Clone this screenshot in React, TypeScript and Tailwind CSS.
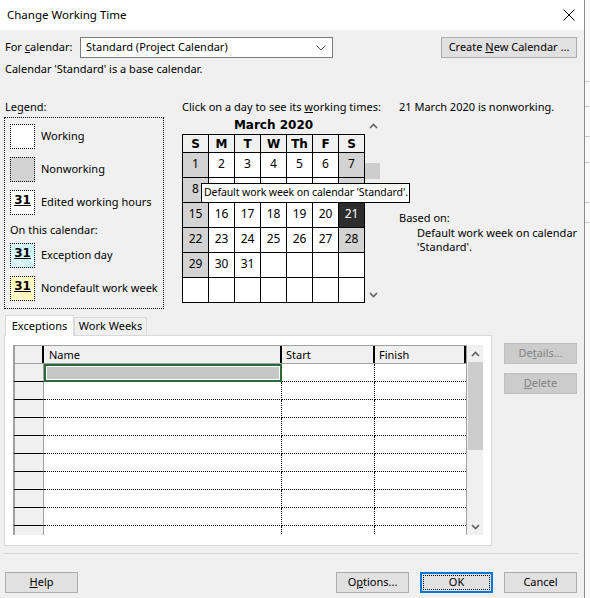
import React from 'react';

// row 2 (8..14) is mostly under the tooltip, only the 8 shows
const weeks: (number | null)[][] = [
  [1, 2, 3, 4, 5, 6, 7],
  [8, 9, 10, 11, 12, 13, 14],
  [15, 16, 17, 18, 19, 20, 21],
  [22, 23, 24, 25, 26, 27, 28],
  [29, 30, 31, null, null, null, null],
  [null, null, null, null, null, null, null],
];

const days = ['S', 'M', 'T', 'W', 'Th', 'F', 'S'];

const Chevron: React.FC<{ dir: 'up' | 'down' }> = ({ dir }) => (
  <svg width="9" height="6" viewBox="0 0 9 6">
    <polyline
      points={dir === 'up' ? '1,5 4.5,1.5 8,5' : '1,1 4.5,4.5 8,1'}
      fill="none"
      stroke="#606060"
      strokeWidth="1.6"
    />
  </svg>
);

const Button: React.FC<{ children: React.ReactNode; className?: string; disabled?: boolean }> = ({
  children,
  className = '',
  disabled,
}) => (
  <div
    className={`h-[21px] w-[73px] flex items-center justify-center border ${
      disabled ? 'bg-[#cccccc] border-[#bfbfbf] text-[#838383]' : 'bg-[#e1e1e1] border-[#adadad] text-black'
    } ${className}`}
  >
    {children}
  </div>
);

const Swatch: React.FC<{ bg: string; label?: boolean }> = ({ bg, label }) => (
  <div className={`w-[25px] h-[25px] border border-dotted border-black flex justify-center pt-[2px] ${bg}`}>
    {label && <span className="font-['DejaVu_Sans',sans-serif] font-bold text-[12px] leading-[14px] underline">31</span>}
  </div>
);

const LegendItem: React.FC<{ bg: string; label?: boolean; text: string; className?: string }> = ({
  bg,
  label,
  text,
  className = '',
}) => (
  <div className={`flex items-center ${className}`}>
    <Swatch bg={bg} label={label} />
    <span className="ml-[6px]">{text}</span>
  </div>
);

const Calendar: React.FC = () => (
  <div className="relative flex ml-[18px]">
    <div className="w-[183px]">
      <div className="h-[17px] text-center font-['DejaVu_Sans',sans-serif] font-bold text-[12px] leading-[17px]">
        March 2020
      </div>
      <div className="grid grid-cols-[repeat(7,26px)] border-l border-t border-black">
        {days.map((d, i) => (
          <div
            key={i}
            className="h-[18px] border-r border-b border-black bg-[#f0f0f0] flex items-center justify-center font-['DejaVu_Sans',sans-serif] font-bold text-[12px]"
          >
            {d}
          </div>
        ))}
        {weeks.map((week, r) =>
          week.map((n, c) => {
            let bg = 'bg-white text-black';
            if (n === 21) bg = 'bg-[#2d2d2d] text-white';
            else if (n !== null && (c === 0 || c === 6)) bg = 'bg-[#d3d3d3] text-black';
            const hidden = r === 1 && c > 0;
            return (
              <div
                key={`${r}-${c}`}
                className={`h-[25px] border-r border-b border-black flex justify-center pt-[3px] text-[12px] leading-[16px] ${bg}`}
              >
                {hidden ? null : n}
              </div>
            );
          })
        )}
      </div>
    </div>
    <div className="w-[16px] h-[185px] flex flex-col">
      <div className="h-[17px] flex items-center justify-center">
        <Chevron dir="up" />
      </div>
      <div className="mt-[29px] h-[16px] w-[15px] bg-[#cdcdcd]" />
      <div className="flex-1" />
      <div className="h-[14px] flex items-center justify-center">
        <Chevron dir="down" />
      </div>
    </div>
    <div className="absolute left-[19px] top-[66px] w-[209px] h-[20px] bg-white border border-black pl-[2px] flex items-center whitespace-nowrap z-10 text-[10.5px] tracking-[-0.1px]">
      Default work week on calendar 'Standard'.
    </div>
  </div>
);

const ExceptionsTable: React.FC = () => {
  const rows = Array.from({ length: 10 }, (_, i) => i);
  return (
    <div className="w-[470px] h-[190px] flex overflow-hidden">
      <div className="w-[453px] flex flex-col">
        <div className="flex h-[19px] bg-[#f0f0f0] border-t border-b border-[#a0a0a0] border-l-2">
          <div className="w-[29px] border-r-2 border-black" />
          <div className="w-[238px] border-r-2 border-black pl-[5px] leading-[17px]">Name</div>
          <div className="w-[93px] border-r-2 border-black pl-[4px] leading-[17px]">Start</div>
          <div className="w-[91px] border-r-2 border-black pl-[4px] leading-[17px]">Finish</div>
        </div>
        {rows.map((i) => (
          <div key={i} className="flex h-[18px] shrink-0">
            <div className="w-[31px] bg-[#f0f0f0] border-l-2 border-r border-b border-l-[#a0a0a0] border-r-[#a0a0a0] border-b-black" />
            {i === 0 ? (
              <div className="w-[238px] border-2 border-[#2a6a35] p-px bg-white">
                <div className="h-full bg-[#c6c6c6]" />
              </div>
            ) : (
              <div className="w-[238px] border-r border-b border-dotted border-black" />
            )}
            <div className="w-[93px] border-r border-b border-dotted border-black" />
            <div className="w-[91px] border-b border-dotted border-black" />
          </div>
        ))}
      </div>
      <div className="w-[17px] h-full flex flex-col bg-[#f0f0f0] border-l border-[#a0a0a0]">
        <div className="h-[17px] flex items-center justify-center">
          <Chevron dir="up" />
        </div>
        <div className="ml-px h-[88px] bg-[#cdcdcd]" />
        <div className="flex-1" />
        <div className="h-[17px] flex items-center justify-center">
          <Chevron dir="down" />
        </div>
      </div>
    </div>
  );
};

export default function App() {
  return (
    <div className="flex w-[590px] h-[598px] overflow-hidden font-['Noto_Sans',sans-serif] text-[11px] text-black">
      <div className="w-[584px] h-[598px] flex flex-col bg-[#f0f0f0] shrink-0">
        <div className="h-[30px] bg-white flex items-center justify-between pl-[7px] pr-[9px] shrink-0">
          <span className="text-[11.5px]">Change Working Time</span>
          <svg width="12" height="12" viewBox="0 0 12 12">
            <path d="M0.5 0.5 L11.5 11.5 M11.5 0.5 L0.5 11.5" stroke="#000" strokeWidth="1" />
          </svg>
        </div>

        <div className="flex items-center h-[21px] mt-[7px]">
          <span className="w-[80px] pl-[5px]">
            For <u>c</u>alendar:
          </span>
          <div className="w-[253px] h-[21px] bg-white border border-[#7a7a7a] flex items-center justify-between pl-[5px] pr-[6px]">
            <span>Standard (Project Calendar)</span>
            <svg width="10" height="6" viewBox="0 0 10 6">
              <polyline points="0.5,0.5 5,5 9.5,0.5" fill="none" stroke="#555" strokeWidth="1" />
            </svg>
          </div>
          <Button className="ml-auto mr-[7px] w-[136px]">
            <span>
              Create <u>N</u>ew Calendar ...
            </span>
          </Button>
        </div>

        <div className="mt-[4px] h-[14px] leading-[14px] pl-[5px]">Calendar 'Standard' is a base calendar.</div>

        <div className="mt-[24px] h-[14px] leading-[14px] flex">
          <span className="w-[182px] pl-[5px]">Legend:</span>
          <span className="w-[217px]">
            Click on a day to see its <u>w</u>orking times:
          </span>
          <span>21 March 2020 is nonworking.</span>
        </div>

        <div className="mt-[3px] h-[192px] flex">
          <div className="ml-[4px] w-[160px] h-[192px] border border-dotted border-black pl-[5px] pt-[6px]">
            <LegendItem bg="bg-white" text="Working" />
            <LegendItem bg="bg-[#d3d3d3]" text="Nonworking" className="mt-[8px]" />
            <LegendItem bg="bg-white" label text="Edited working hours" className="mt-[8px]" />
            <div className="mt-[8px] h-[14px] leading-[14px]">On this calendar:</div>
            <LegendItem
              bg="bg-[repeating-linear-gradient(45deg,#bdeff5_0px,#bdeff5_1px,#eefcff_1px,#eefcff_2px)]"
              label
              text="Exception day"
              className="mt-[6px]"
            />
            <LegendItem
              bg="bg-[repeating-linear-gradient(45deg,#fff6a8_0px,#fff6a8_1px,#ffffe4_1px,#ffffe4_2px)]"
              label
              text="Nondefault work week"
              className="mt-[8px]"
            />
          </div>

          <Calendar />

          <div className="ml-[18px] pt-[94px]">
            <div className="h-[14px] leading-[14px]">Based on:</div>
            <div className="mt-[1px] pl-[18px]">
              <div className="h-[14px] leading-[14px]">Default work week on calendar</div>
              <div className="h-[14px] leading-[14px]">'Standard'.</div>
            </div>
          </div>
        </div>

        <div className="mt-[6px] flex">
          <div className="w-[492px] flex flex-col">
            <div className="h-[20px] flex items-end relative z-10">
              <div className="ml-[5px] w-[69px] h-[21px] -mb-px bg-white border-x border-t border-[#d9d9d9] flex items-center justify-center">
                Exceptions
              </div>
              <div className="w-[73px] h-[18px] bg-[#f0f0f0] border-x border-t border-[#d9d9d9] flex items-center justify-center">
                Work Weeks
              </div>
            </div>
            <div className="ml-[4px] w-[488px] h-[211px] bg-white border border-[#d9d9d9] pl-[8px] pt-[9px]">
              <ExceptionsTable />
            </div>
          </div>
          <div className="ml-[12px] pt-[28px] flex flex-col gap-[9px]">
            <Button disabled>
              <span>
                De<u>t</u>ails...
              </span>
            </Button>
            <Button disabled>
              <span>
                <u>D</u>elete
              </span>
            </Button>
          </div>
        </div>

        <div className="mt-[7px] ml-[4px] w-[574px] h-px bg-[#d7d7d7]" />

        <div className="mt-[18px] h-[21px] flex">
          <Button className="ml-[5px]">
            <span>
              <u>H</u>elp
            </span>
          </Button>
          <div className="ml-auto mr-[7px] flex gap-[11px]">
            <Button>
              <span>
                O<u>p</u>tions...
              </span>
            </Button>
            <div className="h-[21px] w-[73px] border-2 border-[#0078d7] bg-[#e1e1e1] p-px">
              <div className="h-full border border-dotted border-black flex items-center justify-center">OK</div>
            </div>
            <Button>Cancel</Button>
          </div>
        </div>
      </div>

      <div className="w-[6px] h-[598px] bg-[#fafafa] border-l border-[#8c8c8c] flex flex-col">
        <div className="h-[82px] border-b border-[#c8c8c8]" />
        <div className="h-[25px] border-b border-[#c8c8c8]" />
        <div className="h-[30px] border-b border-[#c8c8c8]" />
        <div className="h-[26px] border-b border-[#c8c8c8]" />
        <div className="h-[40px] border-b border-[#c8c8c8]" />
        <div className="h-[20px] border-b border-[#c8c8c8]" />
      </div>
    </div>
  );
}
